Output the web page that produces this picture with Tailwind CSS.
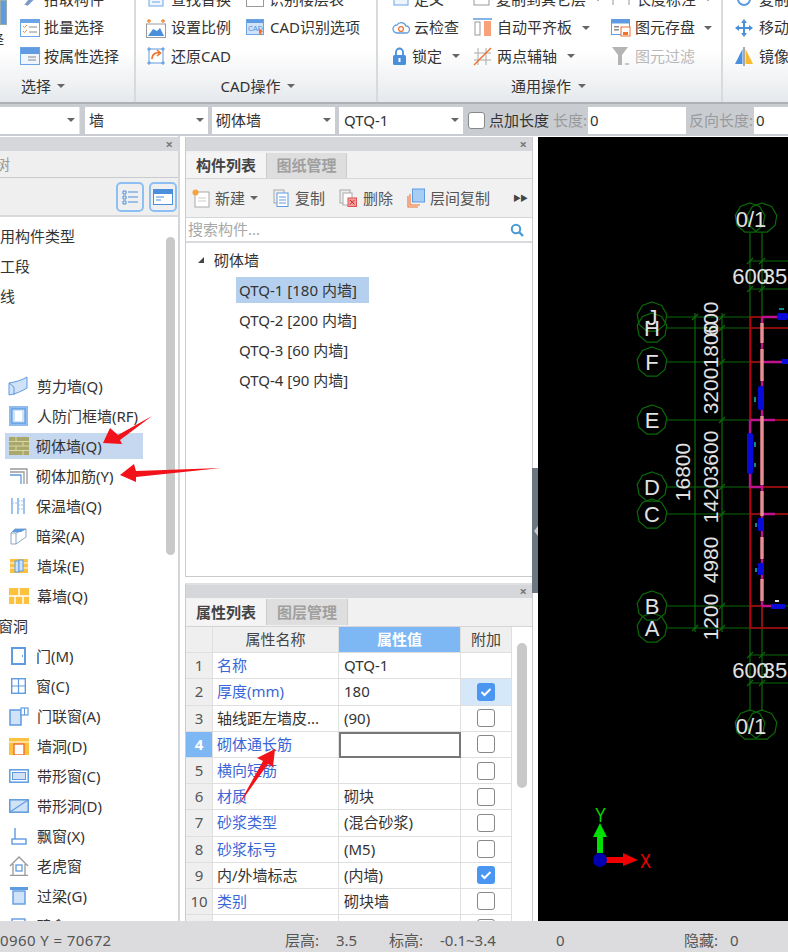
<!DOCTYPE html>
<html lang="zh">
<head>
<meta charset="UTF-8" />
<title>砌体墙</title>
<script src="https://cdn.jsdelivr.net/npm/@tailwindcss/browser@4"></script>
</head>
<body class="bg-white">
<div class="relative w-[788px] h-[952px] overflow-hidden flex flex-col text-[15px] leading-none text-[#333] [font-family:'Noto_Sans','Noto_Sans_CJK_SC',sans-serif]">

  <!-- Ribbon -->
  <div class="h-[102px] shrink-0 flex overflow-hidden bg-gradient-to-b from-white via-white to-[#e6e9ec]">
    <!-- 选择 -->
    <div class="w-[136px] shrink-0 flex flex-col border-r-2 border-[#d8dadd]">
      <div class="h-[93px] -mt-[15px] flex">
        <div class="w-[20px] shrink-0 overflow-hidden pt-[15px]">
          <div class="h-[25px] w-[7px] bg-[#5f9be0] border border-[#9aa]"></div>
          <div class="-ml-[36px] mt-[8px] w-[40px] text-right whitespace-nowrap">选择</div>
        </div>
        <div class="flex flex-col">
          <div class="h-[28.5px] flex items-center gap-[4px]"><svg class="w-[20px] h-[18px]" viewBox="0 0 16 16"><path d="M3 13 L11 3 L14 6 L6 14 Z" fill="#7a9cc8"/></svg><span>拾取构件</span></div>
          <div class="h-[28.5px] flex items-center gap-[4px]"><svg class="w-[20px] h-[18px]" viewBox="0 0 20 18"><rect x=".5" y=".5" width="19" height="17" fill="#fff" stroke="#6ca5e6"/><rect x="1" y="1" width="18" height="3" fill="#6ca5e6"/><path d="M3 7l1.5 1.5L7 6M3 12l1.5 1.5L7 11" stroke="#f08a3c" fill="none"/><path d="M9 8h8M9 13h8" stroke="#888"/></svg><span>批量选择</span></div>
          <div class="h-[28.5px] flex items-center gap-[4px]"><svg class="w-[20px] h-[18px]" viewBox="0 0 20 18"><rect x=".5" y=".5" width="19" height="17" fill="#eef5fd" stroke="#6ca5e6"/><rect x="1" y="1" width="18" height="6" fill="#5f9be0"/><path d="M8 10h8M8 13h8" stroke="#888"/></svg><span>按属性选择</span></div>
        </div>
      </div>
      <div class="flex items-center gap-[6px] pl-[21px] h-[16px]"><span>选择</span><span class="w-0 h-0 border-x-[4px] border-t-[4px] border-x-transparent border-t-[#666]"></span></div>
    </div>

    <!-- CAD操作 -->
    <div class="w-[242px] shrink-0 flex flex-col border-r-2 border-[#d8dadd]">
      <div class="h-[93px] -mt-[15px] flex pl-[10px]">
        <div class="w-[100px] flex flex-col">
          <div class="h-[28.5px] flex items-center gap-[5px]"><svg class="w-[20px] h-[18px]" viewBox="0 0 20 18"><rect x="3" y="2" width="14" height="14" fill="#eef5fd" stroke="#6ca5e6"/><path d="M6 6h8M6 9h8M6 12h8" stroke="#6ca5e6"/></svg><span>查找替换</span></div>
          <div class="h-[28.5px] flex items-center gap-[5px]"><svg class="w-[20px] h-[20px]" viewBox="0 0 20 20"><rect x=".5" y="6" width="19" height="13.5" fill="#fff" stroke="#999"/><path d="M2 18 L7 11 L11 13 L14 10 L18 18 Z" fill="#4a8fdc"/><path d="M1 3h4M15 3h4M3 1v4M17 1v4" stroke="#f08a3c" stroke-width="1.3"/></svg><span>设置比例</span></div>
          <div class="h-[28.5px] flex items-center gap-[5px]"><svg class="w-[20px] h-[20px]" viewBox="0 0 20 20"><rect x="3" y="3" width="14" height="14" fill="#fff" stroke="#5f9be0"/><path d="M1 3h4M15 3h4M1 17h4M15 17h4M3 1v4M17 1v4M3 15v4M17 15v4" stroke="#5f9be0"/><path d="M6 13 C6 8 10 6 14 7 M11 4 L14.5 7 L11 10" fill="none" stroke="#f0702c" stroke-width="1.6"/></svg><span>还原CAD</span></div>
        </div>
        <div class="flex flex-col">
          <div class="h-[28.5px] flex items-center gap-[5px]"><svg class="w-[18px] h-[16px]" viewBox="0 0 18 16"><rect x=".5" y=".5" width="17" height="15" fill="#fff" stroke="#999"/><rect x="3" y="3" width="8" height="3" fill="#f08a3c"/></svg><span class="whitespace-nowrap">识别楼层表</span></div>
          <div class="h-[28.5px] flex items-center gap-[6px]"><svg class="w-[18px] h-[17px]" viewBox="0 0 18 17"><rect x=".5" y=".5" width="17" height="15" fill="#cfe2f7" stroke="#6ca5e6"/><rect x="1" y="1" width="16" height="3" fill="#5f9be0"/><text x="2" y="12" font-size="7" fill="#4a8fdc" font-family="Liberation Sans">CAD</text><path d="M13 9l4 4-2 .5 1 3-3-2z" fill="#f0702c"/></svg><span class="whitespace-nowrap">CAD识别选项</span></div>
        </div>
      </div>
      <div class="flex items-center justify-center gap-[6px] pl-[3px] h-[16px]"><span>CAD操作</span><span class="w-0 h-0 border-x-[4px] border-t-[4px] border-x-transparent border-t-[#666]"></span></div>
    </div>

    <!-- 通用操作 -->
    <div class="w-[345px] shrink-0 flex flex-col border-r-2 border-[#d8dadd]">
      <div class="h-[93px] -mt-[15px] flex pl-[14px]">
        <div class="w-[81px] flex flex-col">
          <div class="h-[28.5px] flex items-center gap-[4px]"><svg class="w-[18px] h-[16px]" viewBox="0 0 18 16"><rect x="2" y="2" width="14" height="12" fill="#eef5fd" stroke="#6ca5e6"/></svg><span>定义</span></div>
          <div class="h-[28.5px] flex items-center gap-[3px]"><svg class="w-[19px] h-[16px]" viewBox="0 0 19 16"><path d="M5 13 a4 4 0 0 1 0-8 a5 5 0 0 1 9 1 a3.5 3.5 0 0 1 0 7 Z" fill="#fff" stroke="#5f9be0" stroke-width="1.3"/><circle cx="9" cy="9" r="2.4" fill="none" stroke="#f0702c" stroke-width="1.2"/></svg><span>云检查</span></div>
          <div class="h-[28.5px] flex items-center gap-[5px]"><svg class="w-[15px] h-[18px]" viewBox="0 0 15 18"><path d="M4 8 V5 a3.5 3.5 0 0 1 7 0 V8" fill="none" stroke="#4a8fdc" stroke-width="1.8"/><rect x="1" y="8" width="13" height="10" rx="1.5" fill="#4a8fdc"/><rect x="6.5" y="11" width="2" height="4" fill="#fff"/></svg><span>锁定</span><span class="ml-[5px] w-0 h-0 border-x-[4px] border-t-[4px] border-x-transparent border-t-[#666]"></span></div>
        </div>
        <div class="w-[138px] flex flex-col">
          <div class="h-[28.5px] flex items-center gap-[5px]"><svg class="w-[18px] h-[16px]" viewBox="0 0 18 16"><rect x="1" y="1" width="15" height="13" fill="#fff" stroke="#999"/></svg><span class="whitespace-nowrap">复制到其它层</span><span class="ml-[3px] w-0 h-0 border-x-[4px] border-t-[4px] border-x-transparent border-t-[#666]"></span></div>
          <div class="h-[28.5px] flex items-center gap-[5px]"><svg class="w-[19px] h-[19px]" viewBox="0 0 19 19"><path d="M0 1h19" stroke="#5f9be0" stroke-width="1.5"/><rect x="2" y="4" width="5" height="13" fill="#fff" stroke="#999"/><rect x="11" y="3" width="7" height="15" fill="#f9a27a"/></svg><span class="whitespace-nowrap">自动平齐板</span><span class="ml-[5px] w-0 h-0 border-x-[4px] border-t-[4px] border-x-transparent border-t-[#666]"></span></div>
          <div class="h-[28.5px] flex items-center gap-[5px]"><svg class="w-[19px] h-[19px]" viewBox="0 0 19 19"><path d="M5 1v17M13 1v17M1 6h17M1 13h17" stroke="#aaa" stroke-width="1"/><path d="M1 18 L18 1" stroke="#f0702c" stroke-width="1.4"/></svg><span class="whitespace-nowrap">两点辅轴</span><span class="ml-[5px] w-0 h-0 border-x-[4px] border-t-[4px] border-x-transparent border-t-[#666]"></span></div>
        </div>
        <div class="flex flex-col">
          <div class="h-[28.5px] flex items-center gap-[5px]"><svg class="w-[20px] h-[16px]" viewBox="0 0 20 16"><path d="M2 2v12M18 2v12M2 8h16" stroke="#999"/></svg><span class="whitespace-nowrap">长度标注</span><span class="ml-[3px] w-0 h-0 border-x-[4px] border-t-[4px] border-x-transparent border-t-[#666]"></span></div>
          <div class="h-[28.5px] flex items-center gap-[4px]"><svg class="w-[20px] h-[18px]" viewBox="0 0 20 18"><rect x=".5" y=".5" width="18" height="15" fill="#fff" stroke="#5f9be0"/><rect x="1" y="1" width="17" height="3.5" fill="#5f9be0"/><rect x="3" y="7" width="5" height="1.5" fill="#888"/><rect x="3" y="10" width="5" height="1.5" fill="#888"/><rect x="10" y="8" width="9" height="9" fill="#fff" stroke="#f0702c"/><rect x="12" y="13" width="5" height="3" fill="#f0702c"/></svg><span class="whitespace-nowrap">图元存盘</span><span class="ml-[5px] w-0 h-0 border-x-[4px] border-t-[4px] border-x-transparent border-t-[#666]"></span></div>
          <div class="h-[28.5px] flex items-center gap-[4px] text-[#b8b8b8]"><svg class="w-[20px] h-[20px]" viewBox="0 0 20 20"><path d="M1 1 H17 L11 9 V19 L7 19 V9 Z" fill="#b4b4b4"/><path d="M14 18h4" stroke="#b4b4b4" stroke-width="1.5"/></svg><span class="whitespace-nowrap">图元过滤</span></div>
        </div>
      </div>
      <div class="flex items-center gap-[7px] pl-[133px] h-[16px]"><span>通用操作</span><span class="w-0 h-0 border-x-[4px] border-t-[4px] border-x-transparent border-t-[#666]"></span></div>
    </div>

    <!-- 修改 -->
    <div class="flex-1 -mt-[15px] pl-[11px] flex flex-col">
      <div class="h-[28.5px] flex items-center gap-[5px]"><svg class="w-[20px] h-[16px]" viewBox="0 0 20 16"><circle cx="10" cy="8" r="6" fill="none" stroke="#5f9be0" stroke-width="2"/></svg><span class="whitespace-nowrap">复制</span></div>
      <div class="h-[28.5px] flex items-center gap-[5px]"><svg class="w-[20px] h-[20px]" viewBox="0 0 20 20"><path d="M10 1 L13 5 H11 V9 H15 V7 L19 10 L15 13 V11 H11 V15 H13 L10 19 L7 15 H9 V11 H5 V13 L1 10 L5 7 V9 H9 V5 H7 Z" fill="#4a8fdc"/></svg><span class="whitespace-nowrap">移动</span></div>
      <div class="h-[28.5px] flex items-center gap-[5px]"><svg class="w-[20px] h-[20px]" viewBox="0 0 20 20"><path d="M8.5 3 V18 H1 Z" fill="#4a8fdc"/><path d="M11.5 3 V18 H19 Z" fill="#fbb92f"/><path d="M10 1v19" stroke="#555"/></svg><span class="whitespace-nowrap">镜像</span></div>
    </div>
  </div>

  <!-- Property toolbar -->
  <div class="h-[34px] shrink-0 flex items-center bg-[#c9cdd2] border-t-2 border-[#aeb2b6] text-[14px]">
    <div class="w-[80px] h-[27px] bg-white flex items-center justify-end pr-[4px] border-r border-[#e4e4e4]"><span class="w-0 h-0 border-x-[4px] border-t-[4px] border-x-transparent border-t-[#666]"></span></div>
    <div class="ml-[5px] w-[123px] h-[27px] bg-white flex items-center justify-between px-[4px]"><span class="text-[15px]">墙</span><span class="w-0 h-0 border-x-[4px] border-t-[4px] border-x-transparent border-t-[#666]"></span></div>
    <div class="ml-[4px] w-[123px] h-[27px] bg-white flex items-center justify-between px-[4px]"><span class="text-[15px]">砌体墙</span><span class="w-0 h-0 border-x-[4px] border-t-[4px] border-x-transparent border-t-[#666]"></span></div>
    <div class="ml-[4px] w-[124px] h-[27px] bg-white flex items-center justify-between pl-[5px] pr-[4px]"><span class="text-[15px]">QTQ-1</span><span class="w-0 h-0 border-x-[4px] border-t-[4px] border-x-transparent border-t-[#666]"></span></div>
    <div class="ml-[5px] w-[17px] h-[17px] rounded-[3px] border border-[#888] bg-white"></div>
    <span class="ml-[4px] text-[15px] whitespace-nowrap">点加长度</span>
    <span class="ml-[4px] text-[15px] text-[#9a9a9a] whitespace-nowrap">长度:</span>
    <div class="ml-[1px] w-[98px] h-[27px] bg-white flex items-center px-[2px] text-[15px]">0</div>
    <span class="ml-[3px] text-[15px] text-[#9a9a9a] whitespace-nowrap">反向长度:</span>
    <div class="ml-[1px] flex-1 h-[27px] bg-white flex items-center px-[2px] text-[15px]">0</div>
  </div>

  <!-- Main -->
  <div class="flex-1 min-h-0 flex bg-white overflow-hidden">
    <!-- Left panel -->
    <div class="w-[180px] shrink-0 flex flex-col border-r-2 border-[#d4d6d9]">
      <div class="mt-[1px] h-[14px] shrink-0 bg-[#d5d7db] flex items-center justify-end pr-[5px] text-[13px] text-[#777] font-bold">×</div>
      <div class="h-[27px] shrink-0 bg-[#efefef] border-b border-[#c8cacd] overflow-hidden flex items-center text-[#999]"><span class="-ml-[35px] whitespace-nowrap">导航树</span></div>
      <div class="h-[39px] shrink-0 bg-[#efefef] border-b-2 border-[#d8dadd] flex items-center justify-end gap-[5px] pr-[1px]">
        <div class="w-[28px] h-[30px] rounded-[5px] border-2 border-[#8cc0f5] flex items-center justify-center"><svg class="w-[16px] h-[16px]" viewBox="0 0 16 16"><path d="M1 2h3v3H1zM1 7h3v3H1zM1 12h3v3H1z" fill="none" stroke="#4a8fdc"/><path d="M6 3h10M6 8h10M6 13h10" stroke="#4a8fdc"/></svg></div>
        <div class="w-[28px] h-[30px] rounded-[5px] border-2 border-[#8cc0f5] flex items-center justify-center"><svg class="w-[20px] h-[16px]" viewBox="0 0 20 16"><rect x=".5" y=".5" width="19" height="15" fill="#fff" stroke="#4a8fdc"/><rect x="1" y="1" width="18" height="4" fill="#4a8fdc"/><path d="M3 8h8M3 11h5" stroke="#4a8fdc"/></svg></div>
      </div>
      <div class="flex-1 min-h-0 flex">
        <div class="w-[165px] shrink-0 overflow-hidden pt-[4px]">
          <div class="h-[30px] flex items-center"><span class="-ml-[15px] whitespace-nowrap">常用构件类型</span></div>
          <div class="h-[30px] flex items-center"><span class="-ml-[15px] whitespace-nowrap">施工段</span></div>
          <div class="h-[30px] flex items-center"><span class="-ml-[15px] whitespace-nowrap">轴线</span></div>
          <div class="h-[60px]"></div>
          <div class="h-[30px] flex items-center pl-[8px] gap-[8px]"><svg class="w-[21px] h-[20px] shrink-0" viewBox="0 0 21 20"><path d="M1 7 C8 6 14 4 19 1 V12 C14 15 8 18 1 19 Z" fill="#cfe2f7" stroke="#5f9be0"/><path d="M1 7 L6 11 V19" fill="none" stroke="#5f9be0"/></svg><span class="whitespace-nowrap">剪力墙(Q)</span></div>
          <div class="h-[30px] flex items-center pl-[8px] gap-[8px]"><svg class="w-[21px] h-[20px] shrink-0" viewBox="0 0 21 20"><rect x="1" y="0" width="19" height="20" fill="#8fbcee"/><rect x="4" y="3" width="13" height="14" fill="#cfe2f7" stroke="#4a8fdc"/><rect x="7" y="5" width="7" height="10" fill="#fff"/></svg><span class="whitespace-nowrap">人防门框墙(RF)</span></div>
          <div class="h-[26px] my-[2px] ml-[5px] w-[138px] bg-[#c6d8f0] flex items-center pl-[4px] gap-[7px]"><svg class="w-[20px] h-[18px] shrink-0" viewBox="0 0 20 18"><rect width="20" height="18" fill="#a9a86a"/><path d="M0 4.5h20M0 9h20M0 13.5h20M7 0v4.5M14 4.5v4.5M7 9v4.5M14 13.5v4.5" stroke="#d8d7a8"/></svg><span class="whitespace-nowrap">砌体墙(Q)</span></div>
          <div class="h-[30px] flex items-center pl-[9px] gap-[8px]"><svg class="w-[19px] h-[18px] shrink-0" viewBox="0 0 19 18"><path d="M1 2 H18 V17 M1 5 H15 V17" fill="none" stroke="#999" stroke-width="1.3"/><path d="M1 8 H12 V17" fill="none" stroke="#5f9be0" stroke-width="1.3"/></svg><span class="whitespace-nowrap">砌体加筋(Y)</span></div>
          <div class="h-[30px] flex items-center pl-[9px] gap-[8px]"><svg class="w-[19px] h-[18px] shrink-0" viewBox="0 0 19 18"><path d="M3 1v16M9 1v16M15 1v16" stroke="#6ca5e6" stroke-width="1.3"/><path d="M9 4h6M9 8h6M9 12h6M3 6h6" stroke="#9cc4ee" stroke-dasharray="2 1"/></svg><span class="whitespace-nowrap">保温墙(Q)</span></div>
          <div class="h-[30px] flex items-center pl-[9px] gap-[8px]"><svg class="w-[19px] h-[20px] shrink-0" viewBox="0 0 19 20"><path d="M2 7 L6 3 H17 V11 L7 18 H2 Z M2 7 H7 L17 3 M7 7 V18" fill="#fff" stroke="#8aa5c5"/><path d="M6 3 H17 L12 6 H3 Z" fill="#5f9be0"/></svg><span class="whitespace-nowrap">暗梁(A)</span></div>
          <div class="h-[30px] flex items-center pl-[10px] gap-[9px]"><svg class="w-[18px] h-[14px] shrink-0" viewBox="0 0 18 14"><rect width="18" height="14" fill="#fcc23e"/><path d="M0 4h18M0 9h18" stroke="#fff"/><rect x="5" y="2" width="4" height="11" fill="#cfe2f7" stroke="#5f9be0"/><rect x="9" y="1" width="4" height="11" fill="#cfe2f7" stroke="#5f9be0"/></svg><span class="whitespace-nowrap">墙垛(E)</span></div>
          <div class="h-[30px] flex items-center pl-[9px] gap-[8px]"><svg class="w-[20px] h-[16px] shrink-0" viewBox="0 0 20 16"><rect width="20" height="16" fill="#fcc23e"/><path d="M0 8h20M10 0v8M6 8v8M14 8v8" stroke="#fff" stroke-width="1.4"/></svg><span class="whitespace-nowrap">幕墙(Q)</span></div>
          <div class="h-[30px] flex items-center"><span class="-ml-[17px] whitespace-nowrap">门窗洞</span></div>
          <div class="h-[30px] flex items-center pl-[11px] gap-[10px]"><svg class="w-[15px] h-[18px] shrink-0" viewBox="0 0 15 18"><rect x="1" y="1" width="13" height="16" fill="#fff" stroke="#5f9be0" stroke-width="2"/><rect x="11" y="8" width="1" height="2" fill="#5f9be0"/></svg><span class="whitespace-nowrap">门(M)</span></div>
          <div class="h-[30px] flex items-center pl-[11px] gap-[10px]"><svg class="w-[15px] h-[16px] shrink-0" viewBox="0 0 15 16"><rect x=".7" y=".7" width="13.6" height="14.6" fill="#fff" stroke="#5f9be0" stroke-width="1.4"/><path d="M7.5 1v14M1 8h13" stroke="#5f9be0" stroke-width="1.2"/></svg><span class="whitespace-nowrap">窗(C)</span></div>
          <div class="h-[30px] flex items-center pl-[9px] gap-[8px]"><svg class="w-[20px] h-[19px] shrink-0" viewBox="0 0 20 19"><rect x="1" y="3" width="11" height="15" fill="#cfe2f7" stroke="#5f9be0" stroke-width="1.5"/><rect x="12" y="1" width="7" height="7" fill="#fff" stroke="#5f9be0" stroke-width="1.2"/><path d="M15.5 1v7" stroke="#5f9be0"/></svg><span class="whitespace-nowrap">门联窗(A)</span></div>
          <div class="h-[30px] flex items-center pl-[9px] gap-[8px]"><svg class="w-[20px] h-[17px] shrink-0" viewBox="0 0 20 17"><rect width="20" height="17" fill="#fcc23e"/><path d="M0 4h20" stroke="#fff"/><rect x="5" y="6" width="10" height="11" fill="#fff" stroke="#f0702c" stroke-width="1.4"/></svg><span class="whitespace-nowrap">墙洞(D)</span></div>
          <div class="h-[30px] flex items-center pl-[9px] gap-[8px]"><svg class="w-[20px] h-[14px] shrink-0" viewBox="0 0 20 14"><rect x=".8" y=".8" width="18.4" height="12.4" fill="#fff" stroke="#5f9be0" stroke-width="1.5"/><rect x="3.5" y="3.5" width="13" height="7" fill="#cfe2f7" stroke="#5f9be0"/></svg><span class="whitespace-nowrap">带形窗(C)</span></div>
          <div class="h-[30px] flex items-center pl-[9px] gap-[8px]"><svg class="w-[20px] h-[14px] shrink-0" viewBox="0 0 20 14"><rect x=".8" y=".8" width="18.4" height="12.4" fill="#cfe2f7" stroke="#5f9be0" stroke-width="1.5"/><path d="M1 13 L19 1" stroke="#5f9be0" stroke-width="1.2"/></svg><span class="whitespace-nowrap">带形洞(D)</span></div>
          <div class="h-[30px] flex items-center pl-[11px] gap-[10px]"><svg class="w-[16px] h-[18px] shrink-0" viewBox="0 0 16 18"><path d="M4 1v11" stroke="#5f9be0" stroke-width="1.4"/><rect x="1" y="12" width="14" height="5" fill="#fff" stroke="#5f9be0" stroke-width="1.4"/></svg><span class="whitespace-nowrap">飘窗(X)</span></div>
          <div class="h-[30px] flex items-center pl-[9px] gap-[8px]"><svg class="w-[20px] h-[20px] shrink-0" viewBox="0 0 20 20"><path d="M1 10 L10 1 L19 10 M4 8 V19 M16 8 V19 M1 19.5 H19" fill="none" stroke="#999" stroke-width="1.3"/><rect x="7" y="9" width="6" height="6" fill="#fff" stroke="#5f9be0" stroke-width="1.3"/></svg><span class="whitespace-nowrap">老虎窗</span></div>
          <div class="h-[30px] flex items-center pl-[10px] gap-[9px]"><svg class="w-[18px] h-[18px] shrink-0" viewBox="0 0 18 18"><rect x="0" y="0" width="18" height="3" fill="#5f9be0"/><rect x="3" y="4" width="12" height="13" fill="#cfe2f7" stroke="#5f9be0" stroke-width="1.4"/></svg><span class="whitespace-nowrap">过梁(G)</span></div>
          <div class="h-[30px] flex items-center pl-[11px] gap-[10px]"><svg class="w-[15px] h-[16px] shrink-0" viewBox="0 0 15 16"><rect x="1" y="1" width="13" height="14" fill="#fff" stroke="#5f9be0" stroke-width="1.4"/></svg><span class="whitespace-nowrap">壁龛(I)</span></div>
        </div>
        <div class="flex-1 pt-[20px] pl-[1px] pr-[3px]"><div class="w-[9px] h-[318px] rounded-full bg-[#c9c9c9]"></div></div>
      </div>
    </div>

    <!-- Middle column -->
    <div class="ml-[5px] w-[348px] shrink-0 flex flex-col">
      <!-- 构件列表 -->
      <div class="mt-[1px] h-[440px] shrink-0 flex flex-col border border-[#c8cacd] border-t-0">
        <div class="h-[14px] shrink-0 bg-[#d5d7db] flex items-center justify-end pr-[5px] text-[13px] text-[#777] font-bold">×</div>
        <div class="h-[27px] shrink-0 bg-[#f1f1f1] flex items-end pt-[2px]">
          <div class="w-[80px] h-full bg-[#f4f4f4] flex items-center justify-center font-bold text-[#444]">构件列表</div>
          <div class="w-[81px] h-full bg-[#dedede] border-l border-[#ccc] border-r flex items-center justify-center text-[#a0a0a0] font-bold">图纸管理</div>
        </div>
        <div class="h-[40px] shrink-0 bg-[#f1f1f1] border-y border-[#d4d6d9] flex items-center pl-[6px] text-[#555]">
          <svg class="w-[19px] h-[19px]" viewBox="0 0 19 19"><rect x="3" y="3" width="14" height="15" fill="#fff" stroke="#aaa"/><circle cx="3.5" cy="3.5" r="3" fill="#f9a23c"/><path d="M6 9h8M6 12h8" stroke="#ccc"/></svg>
          <span class="ml-[4px]">新建</span>
          <span class="ml-[5px] w-0 h-0 border-x-[4px] border-t-[4px] border-x-transparent border-t-[#666]"></span>
          <svg class="ml-[15px] w-[16px] h-[18px]" viewBox="0 0 16 18"><rect x="1" y="1" width="10" height="13" fill="#eee" stroke="#aaa"/><rect x="4" y="4" width="11" height="13.5" fill="#fff" stroke="#5f9be0"/><path d="M6 8h7M6 11h7M6 14h7" stroke="#5f9be0"/></svg>
          <span class="ml-[6px]">复制</span>
          <svg class="ml-[14px] w-[18px] h-[18px]" viewBox="0 0 18 18"><rect x="1" y="1" width="10" height="13" fill="#eee" stroke="#aaa"/><rect x="4" y="4" width="9" height="12" fill="#fff" stroke="#aaa"/><rect x="9" y="9" width="8.5" height="8.5" fill="#f2a0a0" stroke="#e05050"/><path d="M11 11l4.5 4.5M15.5 11L11 15.5" stroke="#d02020"/></svg>
          <span class="ml-[6px]">删除</span>
          <svg class="ml-[14px] w-[18px] h-[20px]" viewBox="0 0 18 20"><path d="M1 8v11h10M3 6v11h10" fill="none" stroke="#f0702c" stroke-width="1.1"/><rect x="5.5" y="1" width="12" height="13" fill="#a8cdf5" stroke="#5f9be0"/></svg>
          <span class="ml-[5px]">层间复制</span>
          <span class="ml-auto mr-[5px] text-[8px] tracking-[-1px] text-[#444]">▶▶</span>
        </div>
        <div class="h-[25px] shrink-0 bg-white border-b-2 border-[#d8dadd] flex items-center justify-between pl-[2px] pr-[8px] text-[#a8a8a8]">
          <span>搜索构件...</span>
          <svg class="w-[14px] h-[14px]" viewBox="0 0 14 14"><circle cx="6" cy="6" r="4.2" fill="none" stroke="#4a9ad4" stroke-width="2"/><path d="M9 9l4 4" stroke="#4a9ad4" stroke-width="2.4"/></svg>
        </div>
        <div class="flex-1 bg-white pt-[2px]">
          <div class="h-[30px] flex items-center pl-[12px]"><span class="w-0 h-0 border-l-[6px] border-b-[6px] border-l-transparent border-b-[#444]"></span><span class="ml-[10px]">砌体墙</span></div>
          <div class="ml-[50px] w-[133px] h-[26px] my-[2px] bg-[#b5d0ef] flex items-center pl-[3px] whitespace-nowrap">QTQ-1 [180 内墙]</div>
          <div class="h-[30px] flex items-center pl-[53px] whitespace-nowrap">QTQ-2 [200 内墙]</div>
          <div class="h-[30px] flex items-center pl-[53px] whitespace-nowrap">QTQ-3 [60 内墙]</div>
          <div class="h-[30px] flex items-center pl-[53px] whitespace-nowrap">QTQ-4 [90 内墙]</div>
        </div>
      </div>

      <!-- 属性列表 -->
      <div class="mt-[6px] flex-1 min-h-0 flex flex-col border-x border-[#c8cacd] border-t-2 border-t-[#e0e0e0]">
        <div class="h-[13px] shrink-0 bg-[#d5d7db] flex items-center justify-end pr-[5px] text-[13px] text-[#777] font-bold">×</div>
        <div class="h-[29px] shrink-0 bg-[#f1f1f1] flex pt-[1px] pb-[1px] border-b border-[#d4d6d9]">
          <div class="w-[80px] h-full bg-[#f4f4f4] flex items-center justify-center font-bold text-[#444]">属性列表</div>
          <div class="w-[82px] h-full bg-[#dedede] border-x border-[#ccc] flex items-center justify-center text-[#a0a0a0] font-bold">图层管理</div>
        </div>
        <div class="flex-1 min-h-0 flex bg-white">
          <div class="w-[326px] shrink-0 grid grid-cols-[27px_126px_122px_51px] auto-rows-[26.2px] content-start [&>div]:border-b [&>div]:border-r [&>div]:border-[#dfdfdf] [&>div]:flex [&>div]:items-center [&>div]:whitespace-nowrap">
            <div class="bg-[#efefef]"></div>
            <div class="bg-[#efefef] justify-center text-[#444]">属性名称</div>
            <div class="bg-[#7db8f5] justify-center text-white font-bold">属性值</div>
            <div class="bg-[#efefef] justify-center text-[#444]">附加</div>

            <div class="bg-[#efefef] justify-center text-[#555]">1</div><div class="pl-[4px] text-[#3a66d8]">名称</div><div class="pl-[5px]">QTQ-1</div><div></div>
            <div class="bg-[#efefef] justify-center text-[#555]">2</div><div class="pl-[4px] text-[#3a66d8]">厚度(mm)</div><div class="pl-[5px]">180</div><div class="bg-[#d5e8fa] justify-center"><svg class="w-[18px] h-[18px]" viewBox="0 0 18 18"><rect width="18" height="18" rx="3" fill="#4a96f0"/><path d="M4.5 9l3 3 6-6" fill="none" stroke="#fff" stroke-width="2"/></svg></div>
            <div class="bg-[#efefef] justify-center text-[#555]">3</div><div class="pl-[4px] text-[#333]">轴线距左墙皮...</div><div class="pl-[5px]">(90)</div><div class="justify-center"><span class="w-[18px] h-[18px] rounded-[3px] border border-[#888] bg-white"></span></div>
            <div class="bg-[#7db8f5] justify-center text-white font-bold">4</div><div class="pl-[4px] text-[#3a66d8]">砌体通长筋</div><div class="!border-2 !border-[#777] bg-white"></div><div class="justify-center"><span class="w-[18px] h-[18px] rounded-[3px] border border-[#888] bg-white"></span></div>
            <div class="bg-[#efefef] justify-center text-[#555]">5</div><div class="pl-[4px] text-[#3a66d8]">横向短筋</div><div></div><div class="justify-center"><span class="w-[18px] h-[18px] rounded-[3px] border border-[#888] bg-white"></span></div>
            <div class="bg-[#efefef] justify-center text-[#555]">6</div><div class="pl-[4px] text-[#3a66d8]">材质</div><div class="pl-[5px]">砌块</div><div class="justify-center"><span class="w-[18px] h-[18px] rounded-[3px] border border-[#888] bg-white"></span></div>
            <div class="bg-[#efefef] justify-center text-[#555]">7</div><div class="pl-[4px] text-[#3a66d8]">砂浆类型</div><div class="pl-[5px]">(混合砂浆)</div><div class="justify-center"><span class="w-[18px] h-[18px] rounded-[3px] border border-[#888] bg-white"></span></div>
            <div class="bg-[#efefef] justify-center text-[#555]">8</div><div class="pl-[4px] text-[#3a66d8]">砂浆标号</div><div class="pl-[5px]">(M5)</div><div class="justify-center"><span class="w-[18px] h-[18px] rounded-[3px] border border-[#888] bg-white"></span></div>
            <div class="bg-[#efefef] justify-center text-[#555]">9</div><div class="pl-[4px] text-[#333]">内/外墙标志</div><div class="pl-[5px]">(内墙)</div><div class="justify-center"><svg class="w-[18px] h-[18px]" viewBox="0 0 18 18"><rect width="18" height="18" rx="3" fill="#4a96f0"/><path d="M4.5 9l3 3 6-6" fill="none" stroke="#fff" stroke-width="2"/></svg></div>
            <div class="bg-[#efefef] justify-center text-[#555]">10</div><div class="pl-[4px] text-[#3a66d8]">类别</div><div class="pl-[5px]">砌块墙</div><div class="justify-center"><span class="w-[18px] h-[18px] rounded-[3px] border border-[#888] bg-white"></span></div>
            <div class="bg-[#efefef] justify-center text-[#555]">11</div><div class="pl-[4px] text-[#3a66d8]"></div><div></div><div class="justify-center"><span class="w-[18px] h-[18px] rounded-[3px] border border-[#888] bg-white"></span></div>
          </div>
          <div class="pt-[16px] pl-[5px]"><div class="w-[10px] h-[145px] rounded-full bg-[#c9c9c9]"></div></div>
        </div>
      </div>
    </div>

    <!-- CAD canvas -->
    <div class="ml-[5px] flex-1 bg-black mt-[1px] overflow-hidden">
      <svg class="block w-[250px] h-[785px]" viewBox="538 136 250 785" font-family="Liberation Sans" fill="none">
        <defs><polygon id="b" points="0,-15 9.6,-11.5 14.8,-2.6 13,7.5 5.1,14.1 -5.1,14.1 -13,7.5 -14.8,-2.6 -9.6,-11.5" stroke="#0a6a0a" stroke-width="1.2"/></defs>
        <g stroke="#0a6a0a" stroke-width="1.2">
          <path d="M750 232V710M762 232V710M750 260H788M750 288H788M750 654H788M750 682H788"/>
          <path d="M667 316H788M667 327H788M667 361H788M667 419H788M667 486H788M667 513H788M667 605H788M667 627H788"/>
          <path d="M695 312V631M722 312V631"/>
          <path d="M692 319l6-6M719 319l6-6M719 330l6-6M719 364l6-6M719 422l6-6M719 489l6-6M719 516l6-6M719 608l6-6M692 630l6-6M719 630l6-6M747 263l6-6M759 263l6-6M747 291l6-6M759 291l6-6M747 657l6-6M759 657l6-6M747 685l6-6M759 685l6-6"/>
        </g>
        <use href="#b" x="652" y="316"/><use href="#b" x="652" y="327"/><use href="#b" x="652" y="361"/><use href="#b" x="652" y="419"/><use href="#b" x="652" y="486"/><use href="#b" x="652" y="513"/><use href="#b" x="652" y="605"/><use href="#b" x="652" y="627"/>
        <use href="#b" x="750" y="217"/><use href="#b" x="762" y="217"/><use href="#b" x="750" y="724"/><use href="#b" x="762" y="724"/>
        <g fill="#e2e2e2" font-size="22" text-anchor="middle">
          <text x="652" y="324">J</text><text x="652" y="335">H</text><text x="652" y="369">F</text><text x="652" y="427">E</text><text x="652" y="494">D</text><text x="652" y="521">C</text><text x="652" y="613">B</text><text x="652" y="635">A</text>
          <text x="751" y="226">0/1</text><text x="751" y="733">0/1</text>
          <text x="750.5" y="283">600</text><text x="775" y="283">35</text>
          <text x="750.5" y="677">600</text><text x="775" y="677">35</text>
        </g>
        <g fill="#e2e2e2" font-size="21" text-anchor="middle">
          <text transform="translate(717.5 318) rotate(-90)">600</text>
          <text transform="translate(717.5 344) rotate(-90)">1800</text>
          <text transform="translate(717.5 390) rotate(-90)">3200</text>
          <text transform="translate(717.5 453) rotate(-90)">3600</text>
          <text transform="translate(717.5 499) rotate(-90)">1420</text>
          <text transform="translate(717.5 559) rotate(-90)">4980</text>
          <text transform="translate(717.5 616) rotate(-90)">1200</text>
          <text transform="translate(690 471) rotate(-90)">16800</text>
        </g>
        <g stroke="#b80012" stroke-width="1.5">
          <path d="M750.5 316V627M762 316V627M750 316H762M750 327H788M750 361H762M775 419H788M762 486H788M750 513H762M775 513H788M750 605H762M750 627H788"/>
        </g>
        <g stroke="#c0128c" stroke-width="2.4">
          <path d="M762 316H777M762 361H788M750 419H775M750 419V486H762M762 513H775M762 605H771M762 316V605"/>
        </g>
        <g stroke="#e89090" stroke-width="3.4">
          <path d="M762 322V342M762 348V380M762 415V484M762 490V515M762 536V558M762 578V600"/>
        </g>
        <g fill="#0a0ad8">
          <rect x="777" y="312" width="11" height="7" rx="2"/><rect x="782" y="358" width="6" height="5"/>
          <rect x="758" y="385" width="6" height="24" rx="2"/><rect x="747" y="432" width="6" height="41" rx="2"/>
          <rect x="758" y="517" width="6" height="13" rx="1"/><rect x="758" y="562" width="6" height="12" rx="1"/>
          <rect x="771" y="603" width="14" height="5" rx="1"/>
        </g>
        <g fill="#0c8a8a">
          <rect x="779" y="307" width="5" height="2"/><rect x="754" y="396" width="2" height="5"/><rect x="754" y="441" width="2" height="5"/><rect x="754" y="462" width="2" height="4"/><rect x="755" y="522" width="2" height="4"/><rect x="755" y="567" width="2" height="4"/>
        </g>
        <rect x="775" y="599" width="4" height="2" fill="#ddd"/>
        <!-- axes -->
        <path d="M597 852V836H593L600 822L607 836H603V852Z" fill="#00e000"/>
        <path d="M606 856H623V852L638 859L623 865V862H606Z" fill="#f00000"/>
        <circle cx="600" cy="859" r="7" fill="#0000b0"/>
        <text x="595" y="821" fill="#00d800" font-size="20" textLength="11" lengthAdjust="spacingAndGlyphs">Y</text>
        <text x="640" y="867" fill="#f00000" font-size="20" textLength="11" lengthAdjust="spacingAndGlyphs">X</text>
      </svg>
    </div>
  </div>

  <!-- Status bar -->
  <div class="h-[31px] shrink-0 bg-[#dcdcde] flex items-center pt-[8px] text-[#555] whitespace-nowrap">
    <span class="w-[285px] tracking-[0.4px]">0960 Y = 70672</span>
    <span class="w-[51px]">层高:</span>
    <span class="w-[53px]">3.5</span>
    <span class="w-[51px]">标高:</span>
    <span class="w-[116px]">-0.1~3.4</span>
    <span class="w-[128px]">0</span>
    <span class="w-[46px]">隐藏:</span>
    <span>0</span>
  </div>

  <!-- Splitter handle -->
  <div class="absolute left-[532px] top-[468px] w-[6px] h-[125px] bg-[#6b7680] flex items-center justify-end"><span class="w-0 h-0 border-y-[5px] border-r-[4px] border-y-transparent border-r-[#c8ccd0]"></span></div>

  <!-- Red annotation arrows -->
  <svg class="absolute left-0 top-0 w-[788px] h-[952px] pointer-events-none" viewBox="0 0 788 952">
    <polygon points="152,416 118,435 110,428 103,443 122,444 120,440" fill="#f2121a"/>
    <polygon points="221,468 136,471 134,464 120,475 136,482 136,477" fill="#f2121a"/>
    <polygon points="238,806 263,761 257,758 275,749 273,767 268,764" fill="#f2121a"/>
  </svg>
</div>
</body>
</html>
